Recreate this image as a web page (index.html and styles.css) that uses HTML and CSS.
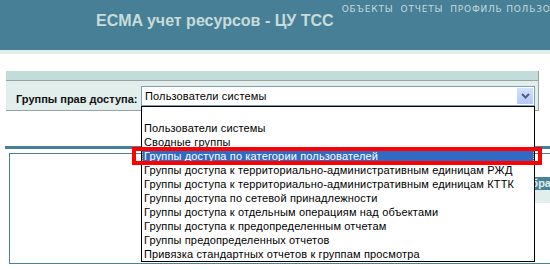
FILE: index.html
```html
<!DOCTYPE html>
<html lang="ru">
<head>
    <meta charset="UTF-8">
    <title>ECMA учет ресурсов - ЦУ ТСС</title>
    <link rel="stylesheet" href="styles.css">
</head>
<body>

<div class="top">
    <div class="title">ECMA учет ресурсов - ЦУ ТСС</div>
    <div class="nav">
        <span>ОБЪЕКТЫ</span>
        <span>ОТЧЕТЫ</span>
        <span>ПРОФИЛЬ ПОЛЬЗОВАТЕЛЯ</span>
    </div>
</div>
<div class="strip"></div>

<div class="filter">
    <div class="filter-head"></div>
    <div class="filter-body">
        <label for="groups">Группы прав доступа:</label>
        <div class="select" id="groups">
            <span>Пользователи системы</span>
            <div class="select-btn">
                <svg width="9" height="6" viewBox="0 0 9 6"><path d="M1 1 L4.5 4.5 L8 1" fill="none" stroke="#4d6185" stroke-width="2"/></svg>
            </div>
        </div>
    </div>
</div>

<div class="content">
    <div class="bar"></div>
    <div class="box">
        <div class="grid-head">Выбранные группы</div>
        <div class="grid-row"></div>
    </div>
</div>

<!-- opened drop-down of the select -->
<ul class="options">
    <li></li>
    <li>Пользователи системы</li>
    <li>Сводные группы</li>
    <li class="active">Группы доступа по категории пользователей</li>
    <li>Группы доступа к территориально-административным единицам РЖД</li>
    <li>Группы доступа к территориально-административным единицам КТТК</li>
    <li>Группы доступа по сетевой принадлежности</li>
    <li>Группы доступа к отдельным операциям над объектами</li>
    <li>Группы доступа к предопределенным отчетам</li>
    <li>Группы предопределенных отчетов</li>
    <li>Привязка стандартных отчетов к группам просмотра</li>
</ul>
<div class="mark"></div>

</body>
</html>
```

FILE: styles.css
```css
body {
    margin: 0;
    font-family: "Liberation Sans", Arial, sans-serif;
    background-color: white;
    overflow: hidden;
    height: 270px;
}
.top {
    display: flex;
    height: 50px;
    padding-left: 96px;
    background-color: #477f96;
    overflow: hidden;
}
.title {
    margin-top: 11px;
    font-size: 16px;
    line-height: 20px;
    font-weight: bold;
    color: #c6dcda;
    white-space: nowrap;
}
.nav {
    display: flex;
    gap: 7px;
    margin-top: 3px;
    margin-left: 8px;
    font-family: "DejaVu Sans", sans-serif;
    font-size: 9px;
    line-height: 12px;
    letter-spacing: 0.8px;
    color: #c6dcda;
    white-space: nowrap;
}
.strip {
    height: 4px;
    background-color: #e1eeec;
}
.filter {
    margin: 17px 11px 0 6px;
    border-right: 1px solid #98a4a4;
}
.filter-head {
    height: 9px;
    background-color: #c2dcda;
    border-bottom: 1px solid #98a4a4;
}
.filter-body {
    display: flex;
    align-items: flex-start;
    height: 29px;
    padding-left: 10px;
    background-color: #e1eeec;
    border-bottom: 1px solid #98a4a4;
}
.filter-body label {
    flex: none;
    width: 125px;
    margin-top: 11px;
    font-size: 11px;
    line-height: 14px;
    font-weight: bold;
    color: #111;
    white-space: nowrap;
}
.select {
    display: flex;
    align-items: center;
    justify-content: space-between;
    box-sizing: border-box;
    width: 394px;
    height: 20px;
    margin-top: 5px;
    padding: 1px 1px 1px 3px;
    background-color: white;
    border: 1px solid #7f9db9;
    font-size: 11px;
    letter-spacing: 0.15px;
    color: black;
}
.select-btn {
    display: flex;
    align-items: center;
    justify-content: center;
    width: 16px;
    height: 16px;
    background: linear-gradient(#d6e2fd, #b4c8f6);
}
.content {
    padding-top: 35px;
}
.bar {
    height: 3px;
    margin-left: 5px;
    background-color: #477f96;
}
.box {
    width: 560px;
    height: 86px;
    margin: 4px 0 0 9px;
    padding: 23px 0 0 496px;
    box-sizing: content-box;
    border: 1px solid #4a8299;
}
.grid-head {
    height: 13px;
    padding-left: 8px;
    background-color: #4a8299;
    font-size: 11px;
    line-height: 13px;
    font-weight: bold;
    color: #e1eeec;
    white-space: nowrap;
}
.grid-row {
    height: 13px;
    background-color: #e1eeec;
}
.options {
    position: absolute;
    left: 141px;
    top: 106px;
    width: 392px;
    margin: 0;
    padding: 0;
    list-style: none;
    background-color: white;
    border: 1px solid black;
}
.options li {
    height: 14px;
    padding-left: 2px;
    font-size: 11px;
    line-height: 14px;
    letter-spacing: 0.15px;
    color: black;
    white-space: nowrap;
}
.options li.active {
    background-color: #316ac5;
    color: white;
    outline: 1px dotted #e8b060;
    outline-offset: -1px;
}
.mark {
    position: absolute;
    left: 132px;
    top: 147px;
    width: 402px;
    height: 10px;
    border: 4px solid #ff0000;
}
```
